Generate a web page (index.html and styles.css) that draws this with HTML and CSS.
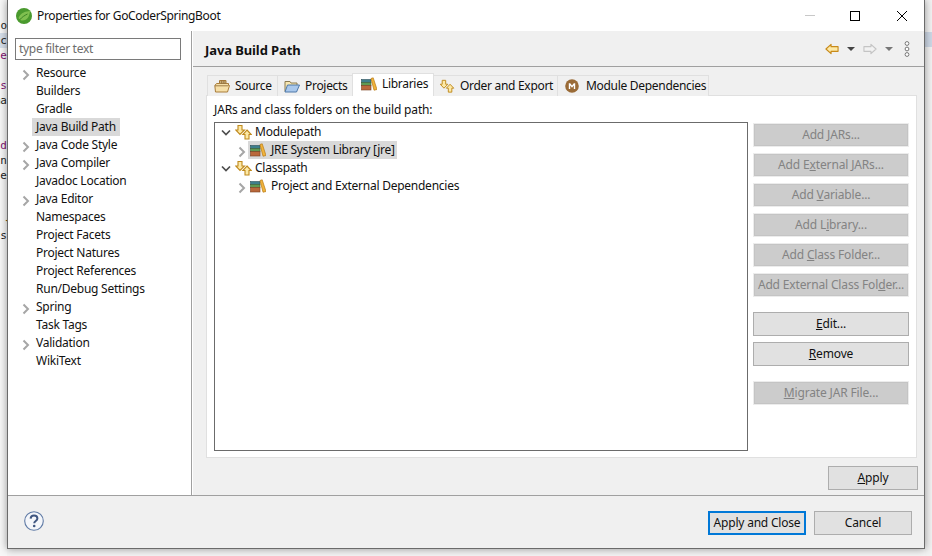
FILE: index.html
```html
<!DOCTYPE html>
<html lang="en">
<head>
<meta charset="utf-8">
<title>Properties for GoCoderSpringBoot</title>
<link rel="stylesheet" href="styles.css">
</head>
<body>
<svg class="defs" width="0" height="0" aria-hidden="true">
  <defs>
    <symbol id="books" viewBox="0 0 16 14">
      <rect x="0.5" y="2.5" width="9.5" height="3" fill="#3e7f8c" stroke="#2a4f5a" stroke-width="0.6"/>
      <rect x="0.5" y="5.5" width="9.5" height="3" fill="#5f9a52" stroke="#3b6136" stroke-width="0.6"/>
      <rect x="0.5" y="8.5" width="9.5" height="4.5" fill="#b9683b" stroke="#7a4020" stroke-width="0.6"/>
      <path d="M10 1.5L12.2 0.8L16 12.5L13 13.2Z" fill="#f1b43c" stroke="#b87a14" stroke-width="0.7"/>
    </symbol>
    <symbol id="updown" viewBox="0 0 17 16">
      <path d="M3 1.5H7V6H9.5L5 10.5L0.8 6H3Z" fill="#fde9a6" stroke="#c08a1e" stroke-width="1.1"/>
      <path d="M12 6L16.2 10.5H14V15H10V10.5H7.8Z" fill="#fde9a6" stroke="#c08a1e" stroke-width="1.1"/>
    </symbol>
    <symbol id="chev-r" viewBox="0 0 8 12"><path d="M1.5 1.5L6 6L1.5 10.5" fill="none" stroke="#a6a6a6" stroke-width="2"/></symbol>
    <symbol id="chev-d" viewBox="0 0 10 8"><path d="M1 1.5L5 5.5L9 1.5" fill="none" stroke="#4d4d4d" stroke-width="1.7"/></symbol>
  </defs>
</svg>
<div class="desktop">
  <div class="code-strip">
    <div class="code-line">&nbsp;</div>
    <div class="code-line">o</div>
    <div class="code-line code-sel">ic</div>
    <div class="code-line code-purple">ce</div>
    <div class="code-line">&nbsp;</div>
    <div class="code-line code-purple">ss</div>
    <div class="code-line">ma</div>
    <div class="code-line">&nbsp;</div>
    <div class="code-line">&nbsp;</div>
    <div class="code-line code-purple">nd</div>
    <div class="code-line">in</div>
    <div class="code-line">te</div>
    <div class="code-line">&nbsp;</div>
    <div class="code-line">&nbsp;</div>
    <div class="code-line code-brace">{</div>
    <div class="code-line">us</div>
  </div>

  <div class="window">
    <header class="titlebar">
      <svg class="app-icon" viewBox="0 0 16 16" aria-hidden="true">
        <circle cx="8" cy="8" r="8" fill="#4a9a2e"/>
        <path d="M2.5 10C5 4 10 3.5 14 3C13.5 8 11.5 12.5 6.5 12.5C5 12.5 3.8 12 2.5 10Z" fill="#7fc04f"/>
        <path d="M3.5 12C6 9 8.5 7.5 11.5 6" fill="none" stroke="#3c8526" stroke-width="1"/>
      </svg>
      <span class="title-text">Properties for GoCoderSpringBoot</span>
      <div class="win-controls">
        <svg class="win-btn" viewBox="0 0 12 12" aria-hidden="true"><path d="M1 5.5H11" stroke="#c8c8c8" stroke-width="1"/></svg>
        <svg class="win-btn" viewBox="0 0 12 12" aria-hidden="true"><rect x="1.5" y="1.5" width="9" height="9" fill="none" stroke="#000" stroke-width="1"/></svg>
        <svg class="win-btn" viewBox="0 0 12 12" aria-hidden="true"><path d="M1 1L11 11M11 1L1 11" stroke="#000" stroke-width="1"/></svg>
      </div>
    </header>

    <div class="body">
      <nav class="nav">
        <div class="filter">type filter text</div>
        <ul class="nav-list">
          <li class="nav-row"><svg class="nav-chev"><use href="#chev-r"/></svg><span class="nav-label">Resource</span></li>
          <li class="nav-row"><span class="nav-label">Builders</span></li>
          <li class="nav-row"><span class="nav-label">Gradle</span></li>
          <li class="nav-row"><span class="nav-label nav-sel">Java Build Path</span></li>
          <li class="nav-row"><svg class="nav-chev"><use href="#chev-r"/></svg><span class="nav-label">Java Code Style</span></li>
          <li class="nav-row"><svg class="nav-chev"><use href="#chev-r"/></svg><span class="nav-label">Java Compiler</span></li>
          <li class="nav-row"><span class="nav-label">Javadoc Location</span></li>
          <li class="nav-row"><svg class="nav-chev"><use href="#chev-r"/></svg><span class="nav-label">Java Editor</span></li>
          <li class="nav-row"><span class="nav-label">Namespaces</span></li>
          <li class="nav-row"><span class="nav-label">Project Facets</span></li>
          <li class="nav-row"><span class="nav-label">Project Natures</span></li>
          <li class="nav-row"><span class="nav-label">Project References</span></li>
          <li class="nav-row"><span class="nav-label">Run/Debug Settings</span></li>
          <li class="nav-row"><svg class="nav-chev"><use href="#chev-r"/></svg><span class="nav-label">Spring</span></li>
          <li class="nav-row"><span class="nav-label">Task Tags</span></li>
          <li class="nav-row"><svg class="nav-chev"><use href="#chev-r"/></svg><span class="nav-label">Validation</span></li>
          <li class="nav-row"><span class="nav-label">WikiText</span></li>
        </ul>
      </nav>

      <main class="pane">
        <div class="pane-head">
          <h1 class="pane-title">Java Build Path</h1>
          <div class="pane-tools">
            <svg class="arrow" viewBox="0 0 15 12" aria-hidden="true"><path d="M6.5 1L1 6L6.5 11V8.5H14V3.5H6.5Z" fill="#fde9a6" stroke="#c88a1a" stroke-width="1.2" stroke-linejoin="round"/></svg>
            <span class="caret caret-dark"></span>
            <svg class="arrow arrow-fwd" viewBox="0 0 15 12" aria-hidden="true"><path d="M8.5 1L14 6L8.5 11V8.5H1V3.5H8.5Z" fill="#f2f2f2" stroke="#c4c4c4" stroke-width="1.2" stroke-linejoin="round"/></svg>
            <span class="caret caret-gray"></span>
            <svg class="dots" viewBox="0 0 6 16" aria-hidden="true"><circle cx="3" cy="2.5" r="1.9" fill="#fff" stroke="#777"/><circle cx="3" cy="8" r="1.9" fill="#fff" stroke="#777"/><circle cx="3" cy="13.5" r="1.9" fill="#fff" stroke="#777"/></svg>
          </div>
        </div>

        <div class="pane-body">
          <div class="tabs">
            <div class="tab tab-source">
              <svg class="tab-icon" viewBox="0 0 16 14" aria-hidden="true">
                <path d="M1.5 13L0.8 6.5L2.5 4.5H5.5V1.5H12V4.5H14.5V6.5H15.5L13.5 13Z" fill="#f6dfa8" stroke="#a97c3a"/>
                <path d="M5.5 4.5H12M7.7 1.5V4.5M9.9 1.5V4.5M5.5 3H12M1 6.8H14" stroke="#8a6530" stroke-width="0.8" fill="none"/>
              </svg>
              <span>Source</span>
            </div>
            <div class="tab tab-projects">
              <svg class="tab-icon" viewBox="0 0 16 14" aria-hidden="true">
                <path d="M1 12.5V2.5H6L7 4H13V6" fill="#f7e6b0" stroke="#8a7a50"/>
                <path d="M1 13L3.5 6H15.5L12.5 13Z" fill="#a9c8ec" stroke="#4f78a8"/>
              </svg>
              <span>Projects</span>
            </div>
            <div class="tab tab-libs tab-active">
              <svg class="tab-icon"><use href="#books"/></svg>
              <span>Libraries</span>
            </div>
            <div class="tab tab-order">
              <svg class="tab-icon"><use href="#updown"/></svg>
              <span>Order and Export</span>
            </div>
            <div class="tab tab-module">
              <svg class="tab-icon" viewBox="0 0 14 14" aria-hidden="true">
                <circle cx="7" cy="7" r="6.8" fill="#9a6b37"/>
                <path d="M3.8 10V4.2H5.2L7 6.6L8.8 4.2H10.2V10H8.8V6.6L7 8.8L5.2 6.6V10Z" fill="#fff"/>
              </svg>
              <span>Module Dependencies</span>
            </div>
          </div>

          <section class="panel">
            <div class="panel-label">JARs and class folders on the build path:</div>
            <div class="panel-main">
              <div class="tree">
                <div class="tree-row">
                  <svg class="tree-chev-d"><use href="#chev-d"/></svg>
                  <svg class="tree-icon-group"><use href="#updown"/></svg>
                  <span class="tree-label">Modulepath</span>
                </div>
                <div class="tree-row tree-child">
                  <svg class="tree-chev-r"><use href="#chev-r"/></svg>
                  <span class="tree-sel">
                    <svg class="tree-icon-lib"><use href="#books"/></svg>
                    <span>JRE System Library [jre]</span>
                  </span>
                </div>
                <div class="tree-row">
                  <svg class="tree-chev-d"><use href="#chev-d"/></svg>
                  <svg class="tree-icon-group"><use href="#updown"/></svg>
                  <span class="tree-label">Classpath</span>
                </div>
                <div class="tree-row tree-child">
                  <svg class="tree-chev-r"><use href="#chev-r"/></svg>
                  <span class="tree-item">
                    <svg class="tree-icon-lib"><use href="#books"/></svg>
                    <span>Project and External Dependencies</span>
                  </span>
                </div>
              </div>
              <div class="btn-col">
                <button class="btn btn-off" disabled>Add <u>J</u>ARs...</button>
                <button class="btn btn-off" disabled>Add E<u>x</u>ternal JARs...</button>
                <button class="btn btn-off" disabled>Add <u>V</u>ariable...</button>
                <button class="btn btn-off" disabled>Add L<u>i</u>brary...</button>
                <button class="btn btn-off" disabled>Add <u>C</u>lass Folder...</button>
                <button class="btn btn-off" disabled>Add External Class Fol<u>d</u>er...</button>
                <button class="btn btn-on btn-sep"><u>E</u>dit...</button>
                <button class="btn btn-on"><u>R</u>emove</button>
                <button class="btn btn-off btn-sep" disabled><u>M</u>igrate JAR File...</button>
              </div>
            </div>
          </section>

          <div class="apply-row">
            <button class="btn btn-on btn-apply"><u>A</u>pply</button>
          </div>
        </div>
      </main>
    </div>

    <footer class="footer">
      <svg class="help" viewBox="0 0 20 20" aria-hidden="true">
        <circle cx="10" cy="10" r="9.3" fill="#f4f6fa" stroke="#5f7aa5" stroke-width="1.1"/>
        <path d="M6.6 7.6C6.8 5.6 8.2 4.6 10 4.6C12 4.6 13.4 5.8 13.4 7.5C13.4 10 10.2 10 10.2 12.3" fill="none" stroke="#3f5680" stroke-width="2"/>
        <circle cx="10.2" cy="15" r="1.3" fill="#3f5680"/>
      </svg>
      <div class="footer-btns">
        <button class="btn btn-default">Apply and Close</button>
        <button class="btn btn-on btn-cancel">Cancel</button>
      </div>
    </footer>
  </div>

  <div class="right-strip">
    <div class="right-sel"></div>
  </div>
</div>
</body>
</html>
```
FILE: styles.css
```css
* { box-sizing: border-box; }
html, body { margin: 0; padding: 0; }
body {
  width: 932px;
  height: 556px;
  overflow: hidden;
  background: #f4f4f4;
  font-family: "Noto Sans", "Open Sans", sans-serif;
  font-size: 12px;
  line-height: 18px;
  letter-spacing: -0.3px;
  color: #111;
}
.defs { position: absolute; }
.desktop { display: flex; align-items: flex-start; width: 932px; height: 556px; }

/* editor showing behind the dialog */
.code-strip {
  width: 7px;
  flex: none;
  overflow: hidden;
  padding-top: 3px;
  font-family: "DejaVu Sans Mono", monospace;
  font-size: 11px;
  letter-spacing: 0;
  line-height: 15px;
  color: #222;
  background: #f7f7f7;
  height: 556px;
}
.code-line { width: 7px; display: flex; justify-content: flex-end; white-space: nowrap; overflow: hidden; height: 15px; }
.code-sel { background: #d6dfea; }
.code-purple { color: #7f0f6e; }
.code-brace { color: #7a5a10; font-weight: bold; justify-content: flex-start; padding-left: 5px; }
.right-strip { width: 7px; flex: none; height: 556px; background: #f2f2f2; padding-top: 32px; }
.right-sel { height: 15px; background: #ced8e6; }

/* dialog */
.window {
  position: relative;
  z-index: 1;
  width: 918px;
  height: 549px;
  flex: none;
  display: flex;
  flex-direction: column;
  background: #fff;
  border: 1px solid #6b6b6b;
  border-top: 0;
  box-shadow: 0 0 8px rgba(0, 0, 0, .4);
}
.titlebar { display: flex; align-items: center; height: 31px; flex: none; padding-left: 8px; }
.app-icon { width: 16px; height: 16px; flex: none; }
.title-text { margin-left: 5px; letter-spacing: -0.34px; }
.win-controls { margin-left: auto; display: flex; gap: 34px; padding-right: 16px; }
.win-btn { width: 12px; height: 12px; }
.win-btn:nth-child(2) { margin-left: -1px; margin-right: 1px; }

.body { flex: 1; display: flex; min-height: 0; border-bottom: 1px solid #a0a0a0; }

/* left nav */
.nav { width: 184px; flex: none; border-right: 1px solid #a0a0a0; padding: 7px 10px 0 7px; }
.filter {
  height: 22px;
  width: 166px;
  border: 1px solid #7a7a7a;
  padding-left: 3px;
  line-height: 19px;
  color: #6d6d6d;
}
.nav-list { list-style: none; margin: 4px 0 0; padding: 0; }
.nav-row { position: relative; height: 18px; padding-left: 21px; white-space: nowrap; letter-spacing: -0.25px; }
.nav-chev { position: absolute; left: 7px; top: 5px; width: 8px; height: 12px; }
.nav-label { display: inline-block; }
.nav-sel { background: #d9d9d9; margin-left: -4px; padding: 0 4px; }

/* right pane */
.pane { flex: 1; min-width: 0; display: flex; flex-direction: column; background: #f0f0f0; border-left: 1px solid #fff; }
.pane-head {
  height: 36px;
  flex: none;
  display: flex;
  align-items: center;
  padding-left: 12px;
  border-bottom: 1px solid #a0a0a0;
}
.pane-title { margin: 3px 0 0; font-size: 13px; font-weight: 700; letter-spacing: -0.1px; }
.pane-tools { margin-left: auto; display: flex; align-items: center; padding-right: 14px; }
.arrow { width: 14px; height: 12px; }
.caret { width: 0; height: 0; border-left: 4px solid transparent; border-right: 4px solid transparent; margin: 1px 8px 0 8px; }
.caret-dark { border-top: 4px solid #444; }
.caret-gray { border-top: 4px solid #777; margin-right: 11px; }
.dots { width: 6px; height: 16px; }

.pane-body { flex: 1; display: flex; flex-direction: column; padding: 6px 7px 0 13px; }
.tabs { display: flex; align-items: flex-end; height: 23px; padding-left: 1px; position: relative; z-index: 1; margin-bottom: -1px; }
.tab {
  display: flex;
  align-items: center;
  gap: 5px;
  height: 21px;
  padding-left: 6px;
  background: #f0f0f0;
  border: 1px solid #e0e0e0;
  border-bottom: 0;
  margin-right: -1px;
  white-space: nowrap;
}
.tab-active { height: 23px; background: #fff; padding-bottom: 2px; padding-left: 8px; }
.tab-icon { width: 16px; height: 14px; flex: none; }
.tab-source { width: 71px; }
.tab-projects { width: 76px; }
.tab-libs { width: 82px; }
.tab-order { width: 125px; padding-left: 5px; }
.tab-module { width: 152px; padding-left: 7px; gap: 7px; }
.tab-module .tab-icon { width: 14px; height: 14px; }

.panel { height: 363px; flex: none; background: #fff; border: 1px solid #e0e0e0; padding: 4px 7px 0; }
.panel-label { height: 22px; line-height: 20px; letter-spacing: -0.15px; }
.panel-main { display: flex; }
.tree { width: 534px; height: 329px; flex: none; border: 1px solid #6b6b6b; padding-top: 0; background: #fff; letter-spacing: -0.25px; }
.tree-row { position: relative; display: flex; align-items: center; height: 18px; padding-left: 20px; white-space: nowrap; }
.tree-child { padding-left: 33px; }
.tree-chev-d { position: absolute; left: 6px; top: 6px; width: 10px; height: 8px; }
.tree-chev-r { position: absolute; left: 23px; top: 5px; width: 8px; height: 12px; }
.tree-icon-group { width: 17px; height: 16px; flex: none; }
.tree-label { margin-left: 3px; }
.tree-sel { display: flex; align-items: center; height: 18px; background: #d9d9d9; padding: 0 2px 0 2px; gap: 5px; }
.tree-item { display: flex; align-items: center; padding-left: 2px; gap: 5px; }
.tree-icon-lib { width: 16px; height: 14px; flex: none; }

.btn-col { margin: 1px 0 0 5px; display: flex; flex-direction: column; gap: 6px; }
.btn {
  font: inherit;
  letter-spacing: -0.15px;
  line-height: 18px;
  height: 24px;
  padding: 0;
  color: #111;
  text-align: center;
  white-space: nowrap;
}
.btn-col .btn { width: 156px; }
.btn-off {
  background: #cccccc;
  border: 1px solid #ececec;
  box-shadow: inset 0 0 0 1px #c4c4c4;
  color: #838383;
}
.btn-on { background: #e1e1e1; border: 1px solid #adadad; }
.btn-sep { margin-top: 9px; }

.apply-row { display: flex; justify-content: flex-end; padding: 8px 0 0; margin-right: -1px; }
.btn-apply { width: 90px; }

.footer { height: 52px; flex: none; display: flex; align-items: center; background: #f0f0f0; padding: 0 12px 0 16px; }
.help { width: 20px; height: 20px; margin-top: -2px; }
.footer-btns { margin-left: auto; display: flex; gap: 8px; margin-top: 2px; }
.btn-default { width: 98px; background: #e1e1e1; border: 2px solid #0078d7; letter-spacing: -0.2px; }
.btn-cancel { width: 98px; }
```
